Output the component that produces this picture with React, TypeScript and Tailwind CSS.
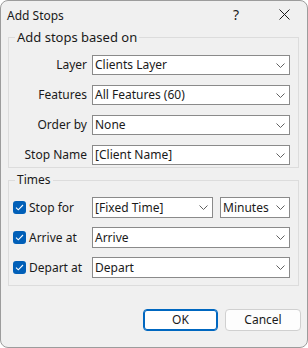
import React from 'react';

const Chevron = () => (
  <svg width="9" height="5" viewBox="0 0 9 5" className="shrink-0">
    <path d="M0.5 0.5 L4.5 4.5 L8.5 0.5" fill="none" stroke="#606060" strokeWidth="1" />
  </svg>
);

const Combo = ({ value, className = '' }: { value: string; className?: string }) => (
  <div
    className={`flex items-center justify-between border border-[#8a8a8a] bg-white pl-[2px] pr-[4px] text-[12px] leading-none ${className}`}
  >
    <span>{value}</span>
    <Chevron />
  </div>
);

const Check = () => (
  <div className="flex h-[13px] w-[13px] shrink-0 items-center justify-center rounded-[3px] bg-[#005fb8]">
    <svg width="9" height="7" viewBox="0 0 9 7">
      <path d="M1 3.6 L3.3 5.8 L8 1" fill="none" stroke="white" strokeWidth="1.1" />
    </svg>
  </div>
);

const fields = [
  { label: 'Layer', value: 'Clients Layer' },
  { label: 'Features', value: 'All Features (60)' },
  { label: 'Order by', value: 'None' },
  { label: 'Stop Name', value: '[Client Name]' },
];

export default function App() {
  return (
    <div
      className="flex h-[348px] w-[308px] flex-col rounded-[8px] border border-[#9c9c9c] bg-[#f0f0f0] text-[#1a1a1a]"
      style={{ fontFamily: '"Noto Sans", "Open Sans", sans-serif' }}
    >
      {/* title bar */}
      <div className="flex h-[27px] shrink-0 items-center pl-[6px] text-[12px]">
        <span className="pt-[2px]">Add Stops</span>
        <span className="ml-auto mr-[40px] text-[14px]">?</span>
        <svg width="11" height="11" viewBox="0 0 11 11" className="mr-[17px]">
          <path d="M0.5 0.5 L10.5 10.5 M10.5 0.5 L0.5 10.5" stroke="#1a1a1a" strokeWidth="1" />
        </svg>
      </div>

      <fieldset className="ml-[7px] w-[291px] border border-[#dcdcdc] pl-0 pr-[7px] pb-[2px]">
        <legend className="ml-[6px] px-[2px] text-[13px] leading-[19px]">Add stops based on</legend>
        <div className="flex flex-col gap-[10px] pt-[8px]">
          {fields.map((f) => (
            <div key={f.label} className="flex items-center gap-[5px]">
              <div className="w-[78px] text-right text-[12px]">{f.label}</div>
              <Combo value={f.value} className="h-[20px] w-[198px]" />
            </div>
          ))}
        </div>
      </fieldset>

      <fieldset className="ml-[7px] mt-[4px] w-[291px] border border-[#dcdcdc] pl-0 pr-[7px] pb-[7px]">
        <legend className="ml-[6px] px-[2px] text-[12px] leading-[16px]">Times</legend>
        <div className="flex flex-col gap-[9px] pt-[9px]">
          <div className="flex items-center">
            <div className="flex w-[83px] items-center gap-[3px] pl-[4px] text-[12px]">
              <Check />
              <span>Stop for</span>
            </div>
            <Combo value="[Fixed Time]" className="h-[21px] w-[121px]" />
            <Combo value="Minutes" className="ml-[7px] h-[21px] w-[70px]" />
          </div>
          <div className="flex items-center">
            <div className="flex w-[83px] items-center gap-[3px] pl-[4px] text-[12px]">
              <Check />
              <span>Arrive at</span>
            </div>
            <Combo value="Arrive" className="h-[21px] w-[198px]" />
          </div>
          <div className="flex items-center">
            <div className="flex w-[83px] items-center gap-[3px] pl-[4px] text-[12px]">
              <Check />
              <span>Depart at</span>
            </div>
            <Combo value="Depart" className="h-[21px] w-[198px]" />
          </div>
        </div>
      </fieldset>

      <div className="mt-[23px] flex justify-end gap-[7px] pr-[6px] text-[12px]">
        <button className="h-[22px] w-[75px] rounded-[4px] border border-[#0067c0] bg-white shadow-[inset_0_0_0_1px_#0067c0]">
          OK
        </button>
        <button className="h-[22px] w-[76px] rounded-[4px] border border-[#d0d0d0] bg-[#fdfdfd]">
          Cancel
        </button>
      </div>
    </div>
  );
}
